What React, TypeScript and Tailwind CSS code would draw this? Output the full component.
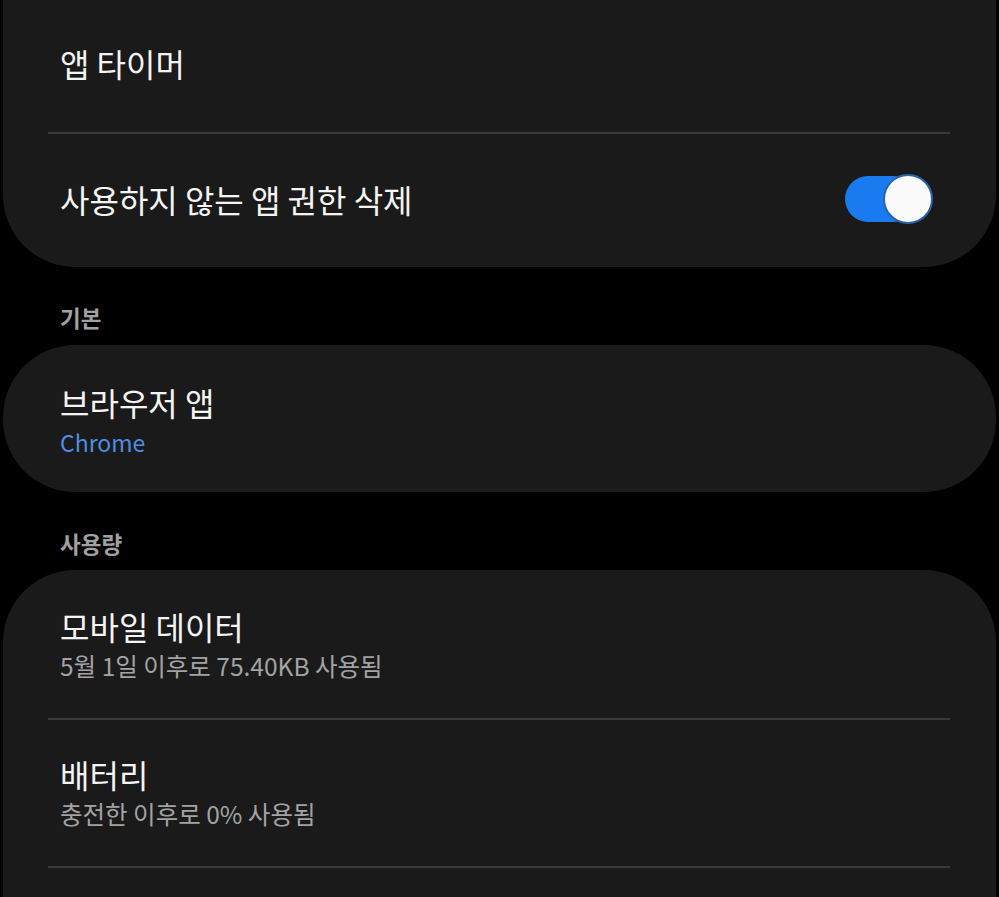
import React from 'react';

const font = { fontFamily: '"Noto Sans CJK KR", "Noto Sans", sans-serif' };

const Divider = () => <div className="ml-[45px] mr-[46px] h-[2px] bg-[#393939]" />;

const Toggle = () => (
  <div className="relative w-[88px] h-[50px] shrink-0">
    <div className="absolute left-0 top-[2px] w-[72px] h-[46px] rounded-full bg-[#1a7bf1]" />
    <div className="absolute right-0 top-0 w-[50px] h-[50px] rounded-full bg-[#fbfbfb] border-2 border-[#2a64a8]" />
  </div>
);

const SectionHeader = ({ label, pt }: { label: string; pt: string }) => (
  <div className={`h-[78px] pl-[60px] ${pt}`}>
    <span className="text-[22.5px] leading-[32px] font-bold text-[#a2a2a2]">{label}</span>
  </div>
);

const TwoLine = ({ title, sub, subClass, pt }: { title: string; sub: string; subClass: string; pt: string }) => (
  <div className={`pl-[57px] ${pt}`}>
    <div className="text-[32px] leading-[40px] text-[#f4f4f4]">{title}</div>
    <div className={`mt-[5px] leading-[30px] ${subClass}`}>{sub}</div>
  </div>
);

export default function App() {
  return (
    <div className="min-h-screen w-full bg-black overflow-hidden" style={font}>
      <div className="mx-[3px] bg-[#1a1a1a] rounded-b-[72px]">
        <div className="h-[132px] pl-[57px] pb-[6px] flex items-center">
          <span className="text-[32px] text-[#f4f4f4]">앱 타이머</span>
        </div>
        <Divider />
        <div className="h-[133px] pl-[57px] pr-[63px] pb-[4px] flex items-center justify-between">
          <span className="text-[32px] text-[#f4f4f4]">사용하지 않는 앱 권한 삭제</span>
          <Toggle />
        </div>
      </div>

      <SectionHeader label="기본" pt="pt-[34px]" />

      <div className="mx-[3px] h-[147px] bg-[#1a1a1a] rounded-[72px]">
        <TwoLine title="브라우저 앱" sub="Chrome" subClass="text-[23px] text-[#4f8ee2]" pt="pt-[37px]" />
      </div>

      <SectionHeader label="사용량" pt="pt-[35px]" />

      <div className="mx-[3px] bg-[#1a1a1a] rounded-t-[72px]">
        <div className="h-[148px]">
          <TwoLine title="모바일 데이터" sub="5월 1일 이후로 75.40KB 사용됨" subClass="text-[24.5px] text-[#a3a3a3]" pt="pt-[36px]" />
        </div>
        <Divider />
        <div className="h-[146px]">
          <TwoLine title="배터리" sub="충전한 이후로 0% 사용됨" subClass="text-[24.5px] text-[#a3a3a3]" pt="pt-[34px]" />
        </div>
        <Divider />
        <div className="h-[40px]" />
      </div>
    </div>
  );
}
